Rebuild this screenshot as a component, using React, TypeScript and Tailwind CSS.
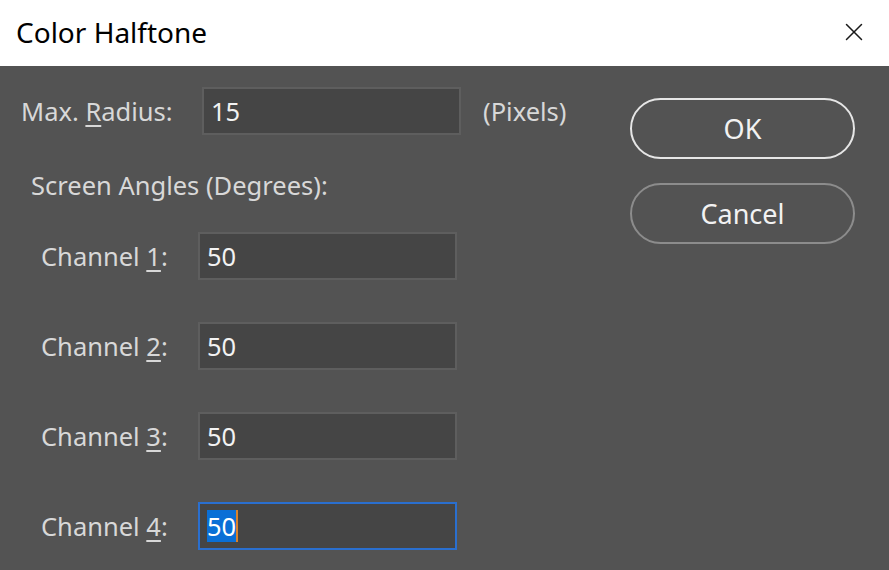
import { X } from 'lucide-react';

const font = { fontFamily: '"Noto Sans", "Open Sans", sans-serif' };

const channels = [1, 2, 3, 4];

function Field({ value, active = false, width = 'w-[259px]' }: { value: string; active?: boolean; width?: string }) {
  return (
    <div
      className={`${width} h-[48px] flex items-center pl-[7px] bg-[#454545] border-2 ${
        active ? 'border-[#2a6fcf]' : 'border-[#5e5e5e]'
      }`}
    >
      {active ? (
        <span className="flex items-center">
          <span className="bg-[#0a6fd6] text-white leading-[32px]">{value}</span>
          <span className="w-[2px] h-[32px] bg-[#d9822b]" />
        </span>
      ) : (
        <span className="text-[#f2f2f2]">{value}</span>
      )}
    </div>
  );
}

export default function App() {
  return (
    <div className="w-[889px] h-[570px] flex flex-col bg-[#535353] overflow-hidden text-[25.5px] leading-[36px]" style={font}>
      {/* Title bar */}
      <div className="h-[66px] shrink-0 bg-white flex items-center justify-between pl-[16px] pr-[20px] pb-[3px]">
        <span className="text-[28px] text-black">Color Halftone</span>
        <X className="w-[30px] h-[30px] text-[#1a1a1a]" strokeWidth={1.2} />
      </div>

      <div className="flex-1 flex">
        {/* Left side */}
        <div className="w-[630px] flex flex-col">
          <div className="flex items-center mt-[21px] pl-[21px]">
            <span className="w-[181px] text-[#d8d8d8]">
              Max. <span className="underline underline-offset-4">R</span>adius:
            </span>
            <Field value="15" width="w-[259px]" />
            <span className="ml-[22px] text-[#d8d8d8]">(Pixels)</span>
          </div>

          <div className="pl-[31px] mt-[32px] text-[#d8d8d8]">Screen Angles (Degrees):</div>

          <div className="flex flex-col gap-[42px] mt-[29px] pl-[41px]">
            {channels.map(n => (
              <div key={n} className="flex items-center">
                <span className="w-[157px] text-[#d8d8d8]">
                  Channel <span className="underline underline-offset-4">{n}</span>:
                </span>
                <Field value="50" active={n === 4} />
              </div>
            ))}
          </div>
        </div>

        {/* Buttons */}
        <div className="flex flex-col gap-[24px] pt-[32px]">
          <button className="w-[225px] h-[61px] rounded-full border-2 border-[#e6e6e6] text-[#f2f2f2] text-[27px]">
            OK
          </button>
          <button className="w-[225px] h-[61px] rounded-full border-2 border-[#8c8c8c] text-[#f2f2f2] text-[27px]">
            Cancel
          </button>
        </div>
      </div>
    </div>
  );
}
